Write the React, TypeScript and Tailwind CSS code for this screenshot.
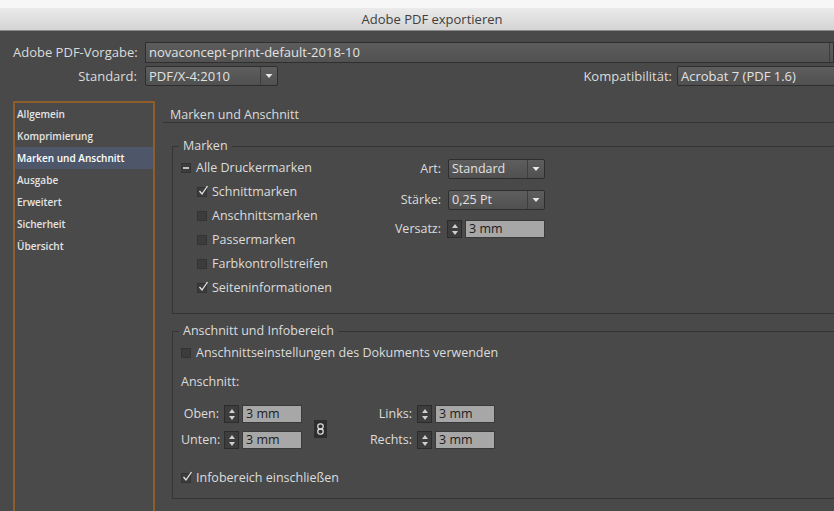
import React from 'react';

const sections = ['Allgemein', 'Komprimierung', 'Marken und Anschnitt', 'Ausgabe', 'Erweitert', 'Sicherheit', 'Übersicht'];

function Caret() {
  return (
    <svg width="8" height="6" viewBox="0 0 8 6" className="shrink-0">
      <path d="M0.5 1 L7.5 1 L4 5 Z" fill="#e8e8e8" />
    </svg>
  );
}

function Dropdown({ value, width }: { value: string; width: string }) {
  return (
    <div className={`${width} h-[20px] flex items-stretch border border-[#2e2e2e] bg-gradient-to-b from-[#5e5e5e] to-[#505050] rounded-[2px]`}>
      <span className="flex-1 flex items-center pl-[3px] text-[#e2e2e2] whitespace-nowrap overflow-hidden">{value}</span>
      <span className="w-[17px] flex items-center justify-center border-l border-[#3e3e3e]">
        <Caret />
      </span>
    </div>
  );
}

function Spinner({ value, width = 'w-[60px]' }: { value: string; width?: string }) {
  return (
    <div className="flex items-center gap-[3px]">
      <div className="w-[15px] h-[18px] bg-[#3d3d3d] border border-[#2c2c2c] flex flex-col items-center justify-center gap-[3px]">
        <svg width="6" height="4" viewBox="0 0 6 4"><path d="M0 4 L3 0 L6 4 Z" fill="#cfcfcf" /></svg>
        <svg width="6" height="4" viewBox="0 0 6 4"><path d="M0 0 L3 4 L6 0 Z" fill="#cfcfcf" /></svg>
      </div>
      <div className={`${width} h-[18px] bg-[#a7a7a7] border border-[#3a3a3a] flex items-center pl-[3px] text-[#1c1c1c]`}>{value}</div>
    </div>
  );
}

function Check({ state, label }: { state: 'on' | 'off' | 'mixed'; label: string }) {
  return (
    <div className="flex items-center gap-[5px] h-[16px]">
      <span className="relative w-[10px] h-[10px] bg-[#3c3c3c] border border-[#333] shrink-0">
        {state === 'mixed' && <span className="absolute left-[1px] right-[1px] top-[3px] h-[2px] bg-[#bdbdbd]" />}
        {state === 'on' && (
          <svg width="11" height="11" viewBox="0 0 11 11" className="absolute left-[0px] top-[-3px]">
            <path d="M1.5 6 L4 9 L9.5 1" stroke="#e6e6e6" strokeWidth="1.3" fill="none" />
          </svg>
        )}
      </span>
      <span className="whitespace-nowrap">{label}</span>
    </div>
  );
}

function ChainIcon() {
  return (
    <div className="w-[13px] h-[18px] bg-[#2e2e2e] flex items-center justify-center">
      <svg width="7" height="12" viewBox="0 0 7 12">
        <rect x="0.8" y="0.8" width="5.4" height="5.2" rx="2.4" stroke="#dcdcdc" strokeWidth="1.3" fill="none" />
        <rect x="0.8" y="6" width="5.4" height="5.2" rx="2.4" stroke="#dcdcdc" strokeWidth="1.3" fill="none" />
      </svg>
    </div>
  );
}

export default function App() {
  return (
    <div className="w-[834px] h-[511px] overflow-hidden bg-[#494949] flex flex-col font-['Open_Sans','Liberation_Sans',sans-serif] text-[12.5px] text-[#dcdcdc] leading-none">
      {/* window title */}
      <div className="h-[8px] shrink-0 bg-[#f7f7f7]" />
      <div className="h-[23px] shrink-0 bg-gradient-to-b from-[#ebebeb] to-[#d4d4d4] border-b border-[#8a8a8a] flex items-center justify-center pl-[30px] text-[13px] text-[#3e3e3e]">
        Adobe PDF exportieren
      </div>

      {/* preset + standard */}
      <div className="flex flex-col gap-[3px] pt-[11px] pl-[13px] shrink-0 text-[13px]">
        <div className="flex items-center gap-[8px]">
          <span className="w-[124px] text-right whitespace-nowrap">Adobe PDF-Vorgabe:</span>
          <div className="w-[700px] h-[21px] border border-[#2f2f2f] bg-gradient-to-b from-[#5c5c5c] to-[#525252] flex items-stretch text-[#e2e2e2]">
            <span className="w-[684px] flex items-center pl-[3px] border-r border-[#3c3c3c]">novaconcept-print-default-2018-10</span>
          </div>
        </div>
        <div className="flex items-center gap-[8px]">
          <span className="w-[124px] text-right">Standard:</span>
          <Dropdown value="PDF/X-4:2010" width="w-[133px]" />
          <span className="ml-auto mr-[-3px]">Kompatibilität:</span>
          <div className="mr-[-20px]">
            <Dropdown value="Acrobat 7 (PDF 1.6)" width="w-[177px]" />
          </div>
        </div>
      </div>

      <div className="flex flex-1 mt-[15px] min-h-0">
        {/* section list */}
        <div className="ml-[13px] w-[142px] shrink-0 border-2 border-b-0 border-[#8f5c2c] bg-[#4a4a4a] flex flex-col text-[10px] font-semibold text-[#e4e4e4]">
          {sections.map((s) => (
            <div
              key={s}
              className={`h-[22px] flex items-center pl-[2px] ${s === 'Marken und Anschnitt' ? 'bg-[#4e5769] text-white' : ''}`}
            >
              {s}
            </div>
          ))}
        </div>

        {/* settings panel */}
        <div className="flex-1 ml-[8px] flex flex-col">
          <div className="h-[22px] flex items-center pt-[8px] pl-[7px] border-b border-[#353535]">Marken und Anschnitt</div>

          <fieldset className="mt-[15px] ml-[9px] mr-[-20px] border border-[#343434] pb-[13px]">
            <legend className="ml-[6px] px-[4px] h-[16px] leading-[16px]">Marken</legend>
            <div className="flex mt-[2px]">
              <div className="w-[200px] pl-[8px] flex flex-col">
                <div className="h-[24px] flex items-center"><Check state="mixed" label="Alle Druckermarken" /></div>
                <div className="pl-[16px] flex flex-col">
                  <div className="h-[24px] flex items-center"><Check state="on" label="Schnittmarken" /></div>
                  <div className="h-[24px] flex items-center"><Check state="off" label="Anschnittsmarken" /></div>
                  <div className="h-[24px] flex items-center"><Check state="off" label="Passermarken" /></div>
                  <div className="h-[24px] flex items-center"><Check state="off" label="Farbkontrollstreifen" /></div>
                  <div className="h-[24px] flex items-center"><Check state="on" label="Seiteninformationen" /></div>
                </div>
              </div>
              <div className="pt-[3px] flex flex-col gap-[11px]">
                <div className="flex items-center gap-[7px]">
                  <span className="w-[68px] text-right">Art:</span>
                  <Dropdown value="Standard" width="w-[97px]" />
                </div>
                <div className="flex items-center gap-[7px]">
                  <span className="w-[68px] text-right">Stärke:</span>
                  <Dropdown value="0,25 Pt" width="w-[97px]" />
                </div>
                <div className="flex items-center gap-[6px] -mt-[1px]">
                  <span className="w-[68px] text-right">Versatz:</span>
                  <Spinner value="3 mm" width="w-[80px]" />
                </div>
              </div>
            </div>
          </fieldset>

          <fieldset className="mt-[9px] ml-[9px] mr-[-20px] border border-[#343434] pb-[12px] pl-[8px]">
            <legend className="ml-[-2px] px-[4px] h-[16px] leading-[16px]">Anschnitt und Infobereich</legend>
            <div className="mt-[6px]">
              <Check state="off" label="Anschnittseinstellungen des Dokuments verwenden" />
            </div>
            <div className="mt-[13px] h-[16px] flex items-center">Anschnitt:</div>
            <div className="mt-[15px] flex items-center">
              <div className="flex flex-col gap-[8px]">
                <div className="flex items-center gap-[5px]">
                  <span className="w-[38px] text-right">Oben:</span>
                  <Spinner value="3 mm" />
                </div>
                <div className="flex items-center gap-[5px]">
                  <span className="w-[38px] text-right">Unten:</span>
                  <Spinner value="3 mm" />
                </div>
              </div>
              <div className="ml-[12px] mt-[4px]">
                <ChainIcon />
              </div>
              <div className="ml-[25px] flex flex-col gap-[8px]">
                <div className="flex items-center gap-[5px]">
                  <span className="w-[60px] text-right">Links:</span>
                  <Spinner value="3 mm" />
                </div>
                <div className="flex items-center gap-[5px]">
                  <span className="w-[60px] text-right">Rechts:</span>
                  <Spinner value="3 mm" />
                </div>
              </div>
            </div>
            <div className="mt-[21px]">
              <Check state="on" label="Infobereich einschließen" />
            </div>
          </fieldset>
        </div>
      </div>
    </div>
  );
}
